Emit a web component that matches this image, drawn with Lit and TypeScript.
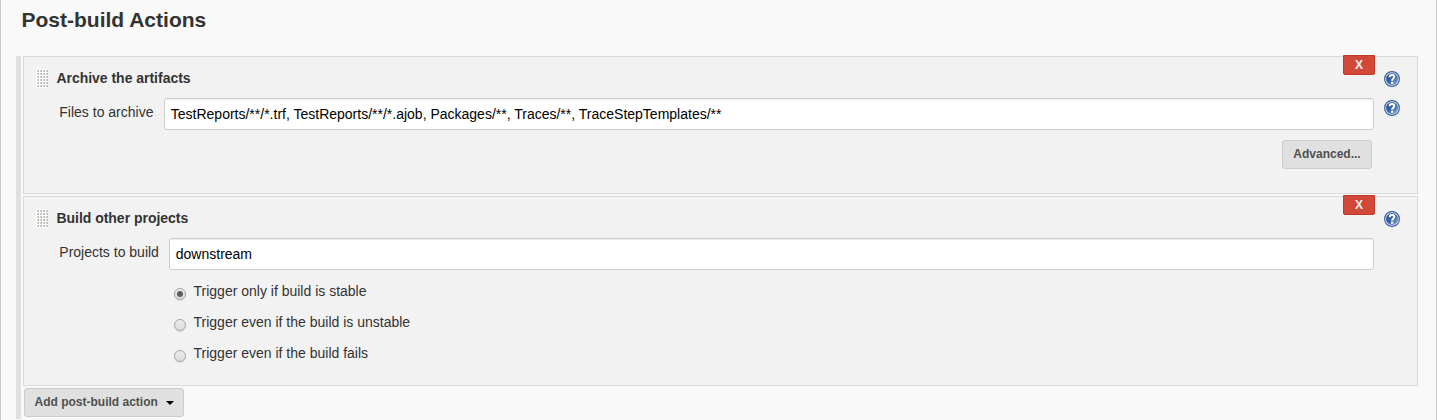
import { LitElement, html, css, svg } from "lit";
import { customElement, property } from "lit/decorators.js";

@customElement("help-icon")
class HelpIcon extends LitElement {
  static styles = css`
    :host { display: block; width: 16px; height: 16px; }
    svg { display: block; }
  `;
  render() {
    return html`<svg width="16" height="16" viewBox="0 0 16 16">
      <defs>
        <linearGradient id="g" x1="0" y1="0" x2="1" y2="1">
          <stop offset="0" stop-color="#1f4788" />
          <stop offset="0.5" stop-color="#3564a6" />
          <stop offset="1" stop-color="#8fb2dc" />
        </linearGradient>
      </defs>
      <circle cx="8" cy="8" r="7.4" fill="#eef2f8" stroke="#3b64a0" stroke-width="1.2" />
      <circle cx="8" cy="8" r="5.8" fill="url(#g)" stroke="#2f5a9b" stroke-width="0.4" />
      <path d="M5.7 6.2 C5.7 4.4 6.7 3.9 8 3.9 C9.5 3.9 10.3 4.7 10.3 5.8 C10.3 7.4 8.1 7.6 8.1 9.7" fill="none" stroke="#fff" stroke-width="2" />
      <rect x="7" y="10.8" width="2.2" height="2" fill="#fff" />
    </svg>`;
  }
}

@customElement("drag-grip")
class DragGrip extends LitElement {
  static styles = css`
    :host { display: block; width: 12px; height: 19px; background: #fff; }
    svg { display: block; }
  `;
  render() {
    const cells = [];
    for (let r = 0; r < 6; r++)
      for (let c = 0; c < 4; c++)
        cells.push(svg`<g transform="translate(${c * 3 + 1} ${r * 3 + 1})">
          <rect width="2" height="2" fill="#d2d2ce" /><rect x="1" y="0" width="1" height="2" fill="#b9b9b4" /></g>`);
    return html`<svg width="12" height="19" shape-rendering="crispEdges">${cells}</svg>`;
  }
}

@customElement("build-step")
class BuildStep extends LitElement {
  @property() heading = "";
  static styles = css`
    :host {
      display: block; position: relative; box-sizing: border-box;
      border: 1px solid #d9d9d9; background: #f2f2f2; padding: 12px 12px 0 12px;
    }
    .head { display: flex; height: 19px; }
    .title { flex: 1; margin-left: 8.4px; font-weight: bold; font-size: 14px; line-height: 18px; letter-spacing: -0.02px; color: #333; }
    help-icon { margin: 2px 5px 0 0; }
    .remove {
      position: absolute; top: -2px; right: 42px; box-sizing: border-box; width: 32px; height: 20px;
      border: 1px solid #c0392b; border-radius: 0 0 2px 2px; background: #d24939; color: #f2f2f2;
      padding: 0; font: bold 12px/18px "Liberation Sans", Arial, sans-serif; text-align: center;
    }
  `;
  render() {
    return html`<button class="remove">X</button>
      <div class="head"><drag-grip></drag-grip><div class="title">${this.heading}</div><help-icon></help-icon></div>
      <slot></slot>`;
  }
}

@customElement("app-root")
class AppRoot extends LitElement {
  static styles = css`
    :host {
      display: block; box-sizing: border-box; height: 420px; overflow: hidden; padding: 8px 18px 0 15px;
      border: solid #ccc; border-width: 0 1px; background: #f9f9f9; color: #333;
      font: 14px/18px "Liberation Sans", Arial, sans-serif;
    }
    h1 { margin: 0 0 24px 5.5px; font-size: 21px; line-height: 24px; height: 24px; }
    .steps { display: flex; flex-direction: column; gap: 2px; border-left: 5px solid #e0e0e0; padding-left: 2px; height: 363px; box-sizing: border-box; }
    .archive { height: 138px; }
    .build { height: 190px; }
    .row { display: flex; margin: 10px 5px 0 23.3px; }
    .label { padding-top: 5px; }
    .files { width: 104.7px; }
    .projects { width: 109.7px; }
    .field {
      flex: 1; box-sizing: border-box; height: 32px; border: 1px solid #ccc; border-radius: 3px; padding: 0 5.8px;
      background: #fff; color: #000; line-height: 31px; box-shadow: inset 0 1px 1px rgba(0,0,0,.07);
    }
    .side { width: 16px; margin: 2px 0 0 10px; }
    .btn {
      box-sizing: border-box; height: 29px; padding: 0 0 1px; border: 1px solid #ccc; border-radius: 3px; background: #e0e0e0;
      color: #505050; font: bold 12px/26px "Liberation Sans", Arial, sans-serif; text-align: center;
    }
    .advanced { display: block; width: 90px; margin: 10px 33px 0 auto; }
    .add { display: flex; align-items: center; width: 160px; flex: none; margin-left: 1px; padding-left: 9.5px; }
    .caret { width: 0; margin: 2px 0 0 8.5px; border: 4px solid transparent; border-top-color: #000; border-bottom: 0; }
    .options { display: flex; flex-direction: column; gap: 13px; margin: 13px 0 0 138px; }
    .option { display: flex; gap: 7.5px; height: 18px; line-height: 17px; }
    .radio {
      box-sizing: border-box; width: 12px; height: 12px; margin-top: 5px; border: 1px solid #a5a5a5; border-radius: 50%;
      background: linear-gradient(#ececec, #dcdcdc); display: grid; place-items: center; box-shadow: 0 1px 1px rgba(0,0,0,.1);
    }
    .dot { width: 6px; height: 6px; border-radius: 50%; background: #5d5d5d; }
  `;
  render() {
    const options = ["Trigger only if build is stable", "Trigger even if the build is unstable", "Trigger even if the build fails"];
    return html`
      <h1>Post-build Actions</h1>
      <div class="steps">
        <build-step class="archive" heading="Archive the artifacts">
          <div class="row">
            <div class="label files">Files to archive</div>
            <div class="field">TestReports/**/*.trf, TestReports/**/*.ajob, Packages/**, Traces/**, TraceStepTemplates/**</div>
            <help-icon class="side"></help-icon>
          </div>
          <button class="btn advanced">Advanced...</button>
        </build-step>
        <build-step class="build" heading="Build other projects">
          <div class="row">
            <div class="label projects">Projects to build</div>
            <div class="field">downstream</div>
            <div class="side"></div>
          </div>
          <div class="options">
            ${options.map((o, i) => html`<div class="option"><div class="radio">${i === 0 ? html`<div class="dot"></div>` : ""}</div><span>${o}</span></div>`)}
          </div>
        </build-step>
        <button class="btn add">Add post-build action<span class="caret"></span></button>
      </div>`;
  }
}
